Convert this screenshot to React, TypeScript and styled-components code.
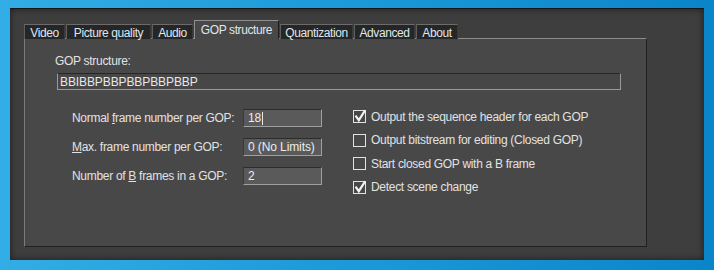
import React from "react";
import styled, { createGlobalStyle } from "styled-components";

const Global = createGlobalStyle`
  html, body { margin: 0; padding: 0; background: #1f9ad8; }
  body { font-family: "Liberation Sans", Arial, sans-serif; }
`;

const Desktop = styled.div`
  width: 714px;
  height: 270px;
  box-sizing: border-box;
  padding: 8px 10px 10px 10px;
  background: linear-gradient(to right, #32ade5 0%, #1d9bd9 45%, #0a85ca 100%);
  display: flex;
`;

const Window = styled.div`
  flex: 1;
  display: flex;
  flex-direction: column;
  box-sizing: border-box;
  padding: 11px 57px 13px 14px;
  background: #3e3e3e;
  border-top: 1px solid #161616;
  box-shadow: inset 0 0 7px rgba(0, 0, 0, 0.55);
`;

const TabStrip = styled.div`
  display: flex;
  align-items: flex-end;
  gap: 1px;
  height: 19px;
  margin-bottom: -1px;
  position: relative;
  z-index: 1;
`;

const Tab = styled.div<{ $active?: boolean; $w: number }>`
  box-sizing: border-box;
  width: ${(p) => p.$w}px;
  height: ${(p) => (p.$active ? "19px" : "15px")};
  display: flex;
  align-items: center;
  justify-content: center;
  font-size: 12px;
  letter-spacing: -0.4px;
  color: #dfe7ef;
  background: ${(p) => (p.$active ? "#484848" : "#262626")};
  border-top: 1px solid ${(p) => (p.$active ? "#8f8f8f" : "#6c6c6c")};
  border-left: 1px solid ${(p) => (p.$active ? "#8f8f8f" : "#5e5e5e")};
  border-right: 1px solid ${(p) => (p.$active ? "#1e1e1e" : "#3a3a3a")};
  padding-top: ${(p) => (p.$active ? "0" : "1px")};
  white-space: nowrap;
`;

const Panel = styled.div`
  flex: 1;
  box-sizing: border-box;
  background: #484848;
  border-top: 1px solid #8c8c8c;
  border-left: 1px solid #7c7c7c;
  border-right: 1px solid #1f1f1f;
  border-bottom: 1px solid #1f1f1f;
  padding: 14px 0 0 30px;
  display: flex;
  flex-direction: column;
  color: #e2e2e2;
  font-size: 12px;
  letter-spacing: -0.3px;
`;

const FieldLabel = styled.div`
  line-height: 16px;
  height: 16px;
`;

const StructureInput = styled.div`
  box-sizing: border-box;
  margin: 4px 0 0 2px;
  width: 564px;
  height: 17px;
  background: #474747;
  border-top: 1px solid #262626;
  border-left: 1px solid #9a9a9a;
  border-right: 1px solid #9a9a9a;
  border-bottom: 1px solid #9a9a9a;
  padding-left: 2px;
  display: flex;
  align-items: center;
  font-size: 12px;
  letter-spacing: -0.1px;
  color: #e8e8e8;
`;

const Columns = styled.div`
  display: flex;
  margin-top: 19px;
  gap: 31px;
`;

const LeftCol = styled.div`
  display: flex;
  flex-direction: column;
  gap: 11px;
  padding-left: 17px;
`;

const NumRow = styled.div`
  display: flex;
  align-items: center;
  height: 18px;
`;

const NumLabel = styled.div`
  width: 171px;
  white-space: nowrap;
`;

const NumInput = styled.div`
  box-sizing: border-box;
  width: 79px;
  height: 18px;
  background: #5a5a5a;
  border-top: 1px solid #2c2c2c;
  border-left: 1px solid #3a3a3a;
  border-right: 1px solid #a0a0a0;
  border-bottom: 1px solid #a0a0a0;
  padding-left: 4px;
  display: flex;
  align-items: center;
  color: #ececec;
  letter-spacing: -0.1px;
`;

const Caret = styled.span`
  display: inline-block;
  width: 1px;
  height: 13px;
  background: #e8e8e8;
  margin-left: 1px;
`;

const RightCol = styled.div`
  display: flex;
  flex-direction: column;
  gap: 10.67px;
  padding-top: 1px;
`;

const CheckRow = styled.div`
  display: flex;
  align-items: center;
  height: 13px;
  gap: 5px;
  white-space: nowrap;
`;

const Box = styled.div`
  position: relative;
  box-sizing: border-box;
  width: 13px;
  height: 13px;
  border: 1px solid #e2e2e2;
  flex: none;
`;

const CheckSvg = styled.svg`
  position: absolute;
  left: 0px;
  top: -2px;
  overflow: visible;
`;

const Check = ({ checked }: { checked?: boolean }) => (
  <Box>
    {checked && (
      <CheckSvg width="13" height="14" viewBox="0 0 13 14">
        <path d="M2.2 7.6 L4.8 11.2 L10.6 2.2" fill="none" stroke="#f4f4f4" strokeWidth="2.2" strokeLinecap="square" />
      </CheckSvg>
    )}
  </Box>
);

const tabs: { label: string; w: number }[] = [
  { label: "Video", w: 41 },
  { label: "Picture quality", w: 85 },
  { label: "Audio", w: 41 },
  { label: "GOP structure", w: 85 },
  { label: "Quantization", w: 73 },
  { label: "Advanced", w: 61 },
  { label: "About", w: 42 },
];

export default function App() {
  return (
    <>
      <Global />
      <Desktop>
        <Window>
          <TabStrip>
            {tabs.map((t) => (
              <Tab key={t.label} $w={t.w} $active={t.label === "GOP structure"}>
                {t.label}
              </Tab>
            ))}
          </TabStrip>
          <Panel>
            <FieldLabel>GOP structure:</FieldLabel>
            <StructureInput>BBIBBPBBPBBPBBPBBP</StructureInput>
            <Columns>
              <LeftCol>
                <NumRow>
                  <NumLabel>
                    Normal <u>f</u>rame number per GOP:
                  </NumLabel>
                  <NumInput>
                    18
                    <Caret />
                  </NumInput>
                </NumRow>
                <NumRow>
                  <NumLabel>
                    <u>M</u>ax. frame number per GOP:
                  </NumLabel>
                  <NumInput>0 (No Limits)</NumInput>
                </NumRow>
                <NumRow>
                  <NumLabel>
                    Number of <u>B</u> frames in a GOP:
                  </NumLabel>
                  <NumInput>2</NumInput>
                </NumRow>
              </LeftCol>
              <RightCol>
                <CheckRow>
                  <Check checked />
                  Output the sequence header for each GOP
                </CheckRow>
                <CheckRow>
                  <Check />
                  Output bitstream for editing (Closed GOP)
                </CheckRow>
                <CheckRow>
                  <Check />
                  Start closed GOP with a B frame
                </CheckRow>
                <CheckRow>
                  <Check checked />
                  Detect scene change
                </CheckRow>
              </RightCol>
            </Columns>
          </Panel>
        </Window>
      </Desktop>
    </>
  );
}
